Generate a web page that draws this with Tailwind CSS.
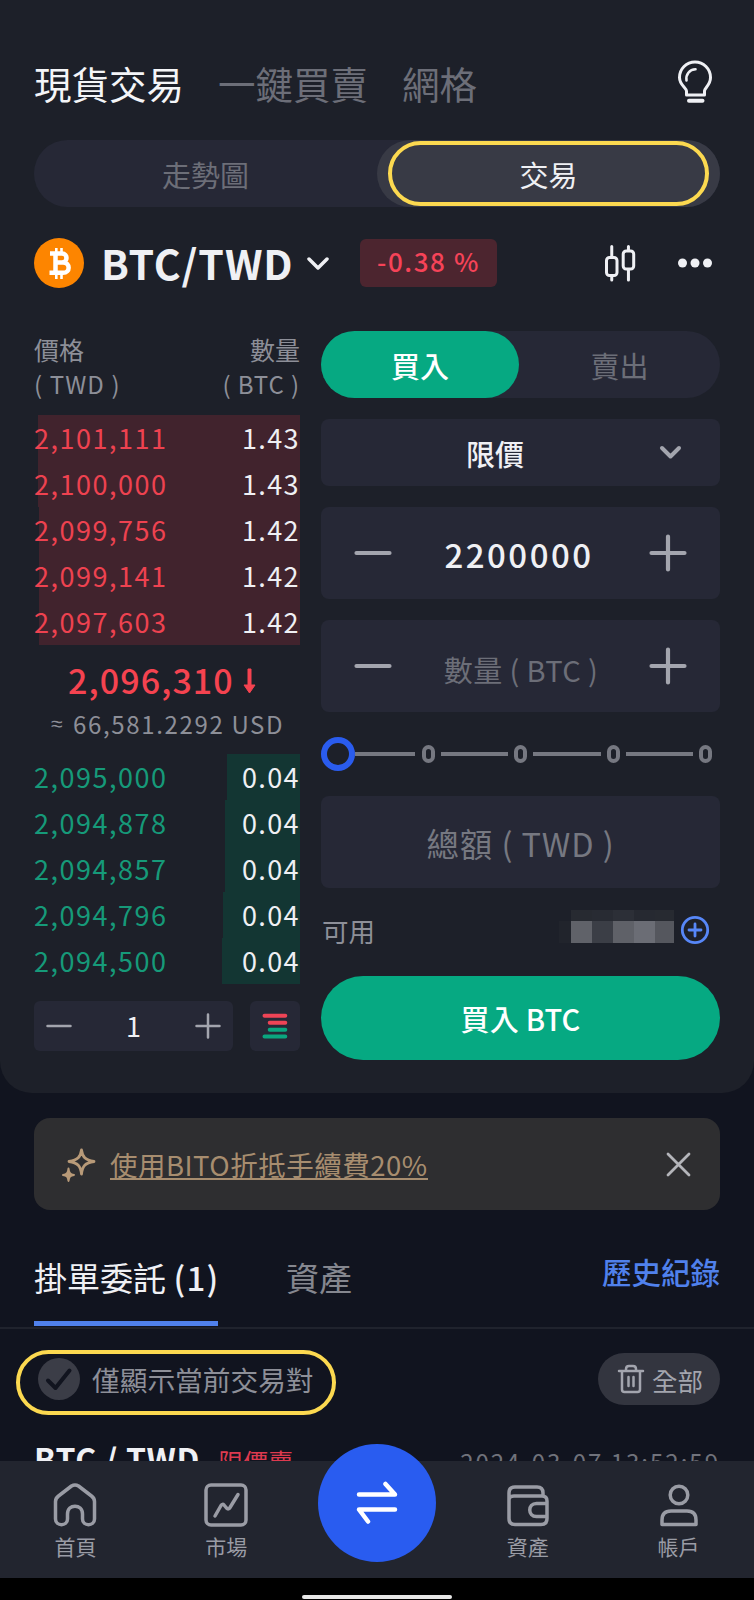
<!DOCTYPE html>
<html lang="zh-Hant">
<head>
    <meta charset="UTF-8">
    <meta name="viewport" content="width=device-width, initial-scale=1.0">
    <title>現貨交易</title>
    <script src="https://cdn.jsdelivr.net/npm/@tailwindcss/browser@4"></script>
</head>
<body class="relative h-[1600px] overflow-hidden bg-[#11141f] text-[#eff0f4] whitespace-nowrap font-['Noto_Sans_CJK_TC','Noto_Sans',sans-serif]">

    <!-- trading card -->
    <section class="h-[1093px] rounded-b-[32px] bg-[#1d2029] px-[34px] pt-[54px]">
        <header class="flex h-[56px] items-center gap-[34px] text-[37.5px] leading-none text-[#6c6e78]">
            <h1 class="pt-[1px] text-[#f4f5f8]">現貨交易</h1>
            <span class="pt-[1px]">一鍵買賣</span>
            <span class="pt-[1px]">網格</span>
            <svg class="ml-auto mr-[7px] h-[44px] w-[36px]" viewBox="0 0 36 44" fill="none" stroke="#eff0f4" stroke-width="3">
                <path d="M9.500 35V31C9.500 28 2.500 25 2.500 17.500A15.500 15.500 0 0 1 33.500 17.500C33.500 25 27.500 28 27.500 31V35Z" stroke-linejoin="round"/>
                <path d="M9.500 20.500C8.500 14.500 12.500 9.500 18.500 9.300" stroke-width="2.600" stroke-linecap="round"/>
                <path d="M12 40.700H25.500" stroke-width="4" stroke-linecap="round"/>
            </svg>
        </header>

        <div class="mt-[30px] flex h-[67px] rounded-full bg-[#262836] text-[29px]">
            <div class="flex w-[343px] items-center justify-center pt-[2px] text-[#6c6e78]">走勢圖</div>
            <div class="flex flex-1 items-center justify-center rounded-full bg-[#383a45]">
                <div class="flex h-[65px] w-[321px] items-center justify-center rounded-full border-[4px] border-[#fcd950] pt-[2px]">交易</div>
            </div>
        </div>

        <div class="mt-[30px] flex h-[51px] items-center">
            <svg class="h-[50px] w-[50px]" viewBox="0 0 50 50" fill="none" stroke="#fff" stroke-width="4.500">
                <circle cx="25" cy="25" r="25" fill="#fd8500" stroke="none"/>
                <path d="M16 15.500H28C34 15.500 34 24.500 28 24.500H21H29C36.500 24.500 36.500 34.800 29 34.800H15.500M21.500 15.500V34.800"/>
                <path d="M22.300 10V15M27.500 10V15M22.300 35V41M27.500 35V41" stroke-width="2.600"/>
            </svg>
            <span class="ml-[17px] w-[192px] text-[41px] leading-none font-bold tracking-[0.9px]">BTC/TWD</span>
            <svg class="mt-[2px] ml-[13px] h-[14px] w-[24px]" viewBox="0 0 24 14" fill="none" stroke="#eff0f4" stroke-width="3.500" stroke-linecap="round" stroke-linejoin="round"><path d="M3 2L12 11L21 2"/></svg>
            <div class="ml-[30px] flex h-[48px] w-[137px] items-center justify-center rounded-[6px] bg-[#4c252f] pb-[4px] text-[26px] font-medium tracking-[1.6px] text-[#f64358]">-0.38 %</div>
            <svg class="ml-auto h-[38px] w-[34px]" viewBox="0 0 34 38" fill="none" stroke="#eff0f4" stroke-width="3" stroke-linecap="round">
                <rect x="2.500" y="13.500" width="10.500" height="18" rx="3"/><path d="M7.750 2.500V12M7.750 32V36"/>
                <rect x="19.200" y="7" width="10.500" height="18" rx="3"/><path d="M24.450 2.500V6M24.450 26V36"/>
            </svg>
            <svg class="ml-[39px] mr-[7px] h-[10px] w-[36px]" viewBox="0 0 36 10" fill="#eff0f4"><circle cx="5.500" cy="5" r="4.500"/><circle cx="18" cy="5" r="4.500"/><circle cx="30.500" cy="5" r="4.500"/></svg>
        </div>

        <div class="mt-[43px] flex gap-[21px]">
            <!-- order book -->
            <div class="w-[266px]">
                <div class="mt-[1px] flex justify-between text-[25px] leading-[34px] text-[#8d8f98]">
                    <div>價格<br><span class="text-[24px] tracking-[1.1px]">( TWD )</span></div>
                    <div class="text-right">數量<br><span class="text-[24px] tracking-[0.9px]">( BTC )</span></div>
                </div>
                <div id="asks" class="mt-[14px]"></div>
                <div class="mt-[12px] flex h-[44px] items-center pt-[2px] pl-[34px] text-[34px] leading-none font-medium tracking-[1.1px] text-[#f54350]">
                    <span class="w-[173px]">2,096,310</span>
                    <svg class="ml-[2px] mt-[2px] h-[26px] w-[13px]" viewBox="0 0 13 26" fill="#f54350" stroke="#f54350" stroke-linejoin="round"><path d="M5 1H8V17H12L6.500 25L1 17H5Z"/></svg>
                </div>
                <div class="mt-[7px] flex h-[31px] pl-[17px] text-[24px] leading-[31px] tracking-[1.650px] text-[#8d8f98]">
                    <span class="w-[22px] font-['Noto_Sans',sans-serif] text-[21px]">≈</span>66,581.2292 USD
                </div>
                <div id="bids" class="mt-[15px]"></div>
                <div class="mt-[17px] flex h-[50px] justify-between">
                    <div class="flex w-[199px] items-center justify-between rounded-[6px] bg-[#262836] px-[12px]">
                        <svg class="h-[26px] w-[26px]" viewBox="0 0 26 26" stroke="#a3a5ae" stroke-width="2.500" stroke-linecap="round"><path d="M1.500 13H24.500"/></svg>
                        <span class="pb-[2px] text-[27px] leading-none">1</span>
                        <svg class="h-[26px] w-[26px]" viewBox="0 0 26 26" stroke="#a3a5ae" stroke-width="2.500" stroke-linecap="round"><path d="M1.500 13H24.500M13 1.500V24.500"/></svg>
                    </div>
                    <div class="flex w-[50px] items-center justify-center rounded-[6px] bg-[#262836]">
                        <svg class="h-[26px] w-[26px]" viewBox="0 0 26 26" stroke-width="4" stroke-linecap="round">
                            <path d="M2.500 2.700H23.300M7.700 9.700H23.300" stroke="#ee4456"/>
                            <path d="M7.700 16.700H23.300M2.500 23.500H23.300" stroke="#0aa67f"/>
                        </svg>
                    </div>
                </div>
            </div>

            <!-- order form -->
            <div class="w-[399px] text-[29px]">
                <div class="flex h-[67px] rounded-full bg-[#262836]">
                    <div class="flex w-[198px] items-center justify-center rounded-full bg-[#06a982] pt-[2px] font-medium text-white">買入</div>
                    <div class="flex flex-1 items-center justify-center pt-[2px] text-[#6c6e78]">賣出</div>
                </div>
                <div class="mt-[21px] flex h-[67px] items-center rounded-[8px] bg-[#262836] pr-[38px]">
                    <span class="ml-[145px] mt-[2px] font-medium">限價</span>
                    <svg class="ml-auto h-[15px] w-[23px]" viewBox="0 0 23 15" fill="none" stroke="#a3a5ae" stroke-width="4" stroke-linecap="round" stroke-linejoin="round"><path d="M3 3L11.500 11.500L20 3"/></svg>
                </div>
                <div class="mt-[21px] flex h-[92px] items-center justify-between rounded-[8px] bg-[#262836] px-[32px]">
                    <svg class="h-[40px] w-[40px]" viewBox="0 0 40 40" stroke="#a3a5ae" stroke-width="4.200" stroke-linecap="round"><path d="M3.500 20H36.500"/></svg>
                    <span class="mt-[4px] -ml-[3px] text-[33px] font-medium tracking-[2.500px]">2200000</span>
                    <svg class="h-[40px] w-[40px]" viewBox="0 0 40 40" stroke="#a3a5ae" stroke-width="4.200" stroke-linecap="round"><path d="M3.500 20H36.500M20 3.500V36.500"/></svg>
                </div>
                <div class="mt-[21px] flex h-[92px] items-center justify-between rounded-[8px] bg-[#262836] px-[32px]">
                    <svg class="h-[40px] w-[40px]" viewBox="0 0 40 40" stroke="#a3a5ae" stroke-width="4.200" stroke-linecap="round"><path d="M3.500 20H36.500"/></svg>
                    <span class="mt-[8px] ml-[1px] text-[29px] tracking-[0.4px] text-[#6c6e78]">數量 ( BTC )</span>
                    <svg class="h-[40px] w-[40px]" viewBox="0 0 40 40" stroke="#a3a5ae" stroke-width="4.200" stroke-linecap="round"><path d="M3.500 20H36.500M20 3.500V36.500"/></svg>
                </div>
                <div class="mt-[25px] flex h-[34px] items-center">
                    <div class="h-[34px] w-[34px] rounded-full border-[6px] border-[#2a5cee]"></div>
                    <div class="mr-[6.5px] h-[4px] w-[60px] bg-[#767881]"></div>
                    <div class="h-[18px] w-[13px] rounded-full border-[4px] border-[#767881]"></div>
                    <div class="mx-[6px] h-[4px] w-[67.5px] bg-[#767881]"></div>
                    <div class="h-[18px] w-[13px] rounded-full border-[4px] border-[#767881]"></div>
                    <div class="mx-[6px] h-[4px] w-[67.5px] bg-[#767881]"></div>
                    <div class="h-[18px] w-[13px] rounded-full border-[4px] border-[#767881]"></div>
                    <div class="mx-[6px] h-[4px] w-[67.5px] bg-[#767881]"></div>
                    <div class="h-[18px] w-[13px] rounded-full border-[4px] border-[#767881]"></div>
                </div>
                <div class="mt-[25px] flex h-[92px] items-center justify-center rounded-[8px] bg-[#262836] pt-[2px] text-[32.5px] tracking-[0.9px] text-[#767881]">總額 ( TWD )</div>
                <div class="mt-[20px] flex h-[44px] items-center justify-between pr-[10px]">
                    <span class="mt-[2px] ml-[1px] text-[26.5px] text-[#8d8f98]">可用</span>
                    <div class="flex items-center">
                        <!-- masked balance -->
                        <div class="mr-[6px] grid grid-cols-[12px_21px_21px_21px_21px_19px] grid-rows-[11px_22px] pb-[7px]">
                            <i></i><i class="bg-[#272a31]"></i><i class="bg-[#282b33]"></i><i class="bg-[#2c2f37]"></i><i class="bg-[#262931]"></i><i class="bg-[#272a31]"></i>
                            <i class="bg-[#21242c]"></i><i class="bg-[#606269]"></i><i class="bg-[#3b3e46]"></i><i class="bg-[#5f6168]"></i><i class="bg-[#6b6d75]"></i><i class="bg-[#55575e]"></i>
                        </div>
                        <svg class="h-[30px] w-[30px]" viewBox="0 0 30 30" fill="none" stroke="#5787f8" stroke-width="2.800" stroke-linecap="round"><circle cx="15" cy="15" r="12.700"/><path d="M9 15H21M15 9V21"/></svg>
                    </div>
                </div>
                <div class="mt-[24px] flex h-[84px] items-center justify-center rounded-full bg-[#06a982] pt-[1px] font-medium tracking-[0.2px] text-white">買入 BTC</div>
            </div>
        </div>
    </section>

    <!-- fee banner -->
    <div class="mx-[34px] mt-[25px] flex h-[92px] items-center rounded-[16px] bg-[#2e2e30] pl-[26px] pr-[28px]">
        <svg class="h-[36px] w-[36px]" viewBox="0 0 36 36" fill="none" stroke="#b89a78" stroke-width="2.800" stroke-linejoin="round">
            <path d="M21.500 4C22.500 11 25 14 34 15.500C25 17 22.500 20 21.500 28C20.500 20 18 17 9 15.500C18 14 20.500 11 21.500 4Z"/>
            <path d="M8.500 22.500C9 27 10 28.500 14 29C10 29.500 9 31 8.500 35C8 31 7 29.500 3 29C7 28.500 8 27 8.500 22.500Z" fill="#b89a78" stroke-width="2"/>
        </svg>
        <a class="ml-[14px] h-[31px] border-b-2 border-[#a78d6f] text-[27.5px] leading-[31px] tracking-[0.5px] text-[#a78d6f]">使用BITO折抵手續費20%</a>
        <svg class="ml-auto h-[27px] w-[27px]" viewBox="0 0 27 27" stroke="#b4b5ba" stroke-width="2.800" stroke-linecap="round"><path d="M3 3L24 24M24 3L3 24"/></svg>
    </div>

    <!-- orders -->
    <div class="mt-[25px] flex h-[94px] border-b-2 border-[#20232d] px-[34px] text-[33px]">
        <div class="h-[91px] w-[184px] border-b-[5px] border-[#5081ec] pt-[18px]">掛單委託 <span class="tracking-[1.3px] font-medium">(1)</span></div>
        <div class="ml-[68px] pt-[18px] text-[#85878f]">資產</div>
        <div class="ml-auto pt-[14px] text-[29.5px] font-medium text-[#5081ec]">歷史紀錄</div>
    </div>
    <div class="mt-[21px] flex h-[65px] items-start justify-between pl-[16px] pr-[34px]">
        <div class="flex h-[65px] w-[320px] items-center rounded-full border-[4px] border-[#fcd950] pl-[18px]">
            <svg class="mb-[7px] h-[42px] w-[42px]" viewBox="0 0 42 42" fill="none"><circle cx="21" cy="21" r="21" fill="#3b3d47"/><path d="M10 22.500L17.500 30L31.500 12.500" stroke="#11141f" stroke-width="4" stroke-linecap="round" stroke-linejoin="round"/></svg>
            <span class="ml-[12px] pb-[5px] text-[27.7px] leading-none text-[#8d8f98]">僅顯示當前交易對</span>
        </div>
        <div class="mt-[3px] flex h-[52px] w-[122px] items-center rounded-full bg-[#33353f] pl-[19px] text-[#a3a5ae]">
            <svg class="h-[30px] w-[28px]" viewBox="0 0 28 30" fill="none" stroke="#a3a5ae" stroke-width="2.500" stroke-linecap="round" stroke-linejoin="round"><path d="M2 7H26M5 7V25.500Q5 28 7.500 28H20.500Q23 28 23 25.500V7M9 7V5Q9 2 12 2H16Q19 2 19 5V7M11.500 13V22M16.500 13V22"/></svg>
            <span class="ml-[7px] pt-[1px] text-[25.5px] leading-none">全部</span>
        </div>
    </div>
    <div class="mt-[19px] flex h-[50px] items-baseline px-[34px]">
        <span class="text-[32px] font-bold tracking-[0.7px]">BTC / TWD</span>
        <span class="ml-[18px] text-[25px] text-[#dd3a4f]">限價賣</span>
        <span class="ml-auto text-[24px] tracking-[2px] text-[#70727b]">2024-03-07 13:52:59</span>
    </div>

    <!-- bottom navigation -->
    <nav class="absolute inset-x-0 bottom-0 h-[139px] bg-black">
        <div class="grid h-[117px] grid-cols-5 bg-[#22252f] text-[21px] text-[#9a9ca5]">
            <div class="flex flex-col items-center pt-[21px]">
                <svg class="h-[46px] w-[46px]" viewBox="0 0 46 46" fill="none" stroke="#9a9ca5" stroke-width="3.500" stroke-linejoin="round"><path d="M3.500 19.500C3.500 17 4.500 15.500 6.500 14L19.500 4Q23 1.800 26.500 4L39.500 14C41.500 15.500 42.500 17 42.500 19.500V37C42.500 44.500 30.500 44.500 30.500 37V32C30.500 21.500 15.500 21.500 15.500 32V37C15.500 44.500 3.500 44.500 3.500 37Z"/></svg>
                <span class="mt-[8px] leading-[20px]">首頁</span>
            </div>
            <div class="flex flex-col items-center pt-[21px]">
                <svg class="h-[46px] w-[46px]" viewBox="0 0 46 46" fill="none" stroke="#9a9ca5" stroke-width="3.500" stroke-linejoin="round" stroke-linecap="round"><rect x="3" y="3" width="40" height="40" rx="5"/><path d="M12 34L18 23.500Q19.500 21.500 21 23L23.500 26Q25.500 28 27 25.500L35 12.500"/></svg>
                <span class="mt-[8px] leading-[20px]">市場</span>
            </div>
            <div class="flex justify-center">
                <div class="-mt-[17px] flex h-[118px] w-[118px] shrink-0 items-center justify-center rounded-full bg-[#295cf0]">
                    <svg class="h-[44px] w-[42px]" viewBox="0 0 42 44" fill="none" stroke="#fff" stroke-width="4.500" stroke-linecap="round" stroke-linejoin="round"><path d="M3 13.500H39L29.500 3M39 28.500H3L12 40.500"/></svg>
                </div>
            </div>
            <div class="flex flex-col items-center pt-[21px]">
                <svg class="h-[46px] w-[46px]" viewBox="0 0 46 46" fill="none" stroke="#9a9ca5" stroke-width="3.500" stroke-linejoin="round"><path d="M38 14V11Q38 5 32 5H10Q4 5 4 11V36.500Q4 42.500 10 42.500H36Q42 42.500 42 36.500V19Q42 14 37 14H9Q4 14 4 18M42 21.500H31.500C22.500 21.500 22.500 34.500 31.500 34.500H42"/></svg>
                <span class="mt-[8px] leading-[20px]">資產</span>
            </div>
            <div class="flex flex-col items-center pt-[21px]">
                <svg class="h-[46px] w-[46px]" viewBox="0 0 46 46" fill="none" stroke="#9a9ca5" stroke-width="3.500" stroke-linejoin="round"><circle cx="23" cy="13" r="8.800"/><path d="M6 42.500V38Q6 29 15 29H31Q40 29 40 38V42.500Z"/></svg>
                <span class="mt-[8px] leading-[20px]">帳戶</span>
            </div>
        </div>
        <div class="mx-auto mt-[17px] h-[4px] w-[150px] rounded-full bg-[#e8e8e8]"></div>
    </nav>

    <script>
        const asks = [
            ["2,101,111", "1.43", 262],
            ["2,100,000", "1.43", 262],
            ["2,099,756", "1.42", 261],
            ["2,099,141", "1.42", 261],
            ["2,097,603", "1.42", 261]
        ];
        const bids = [
            ["2,095,000", "0.04", 73],
            ["2,094,878", "0.04", 75],
            ["2,094,857", "0.04", 75],
            ["2,094,796", "0.04", 77],
            ["2,094,500", "0.04", 78]
        ];

        function renderRows(id, rows, color, bar) {
            document.getElementById(id).innerHTML = rows.map(([price, amount, width]) => `
                <div class="relative flex h-[46px] items-center justify-between text-[27px] leading-none">
                    <div class="absolute inset-y-0 right-0 ${bar}" style="width:${width}px"></div>
                    <span class="relative pb-[2px] tracking-[1.5px] ${color}">${price}</span>
                    <span class="relative pb-[2px] tracking-[1.4px]">${amount}</span>
                </div>`).join("");
        }

        renderRows("asks", asks, "text-[#ee4250]", "bg-[#41232d]");
        renderRows("bids", bids, "text-[#169a79]", "bg-[#133633]");
    </script>
</body>
</html>
